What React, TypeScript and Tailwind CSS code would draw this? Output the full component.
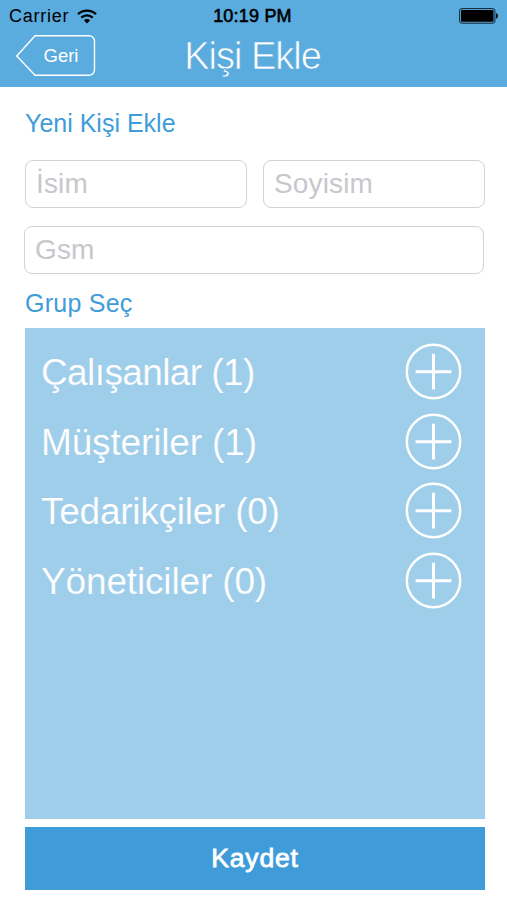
import { useState } from "react";
import clsx from "clsx";

const groups = [
  { name: "Çalışanlar", count: 1, text: "tracking-[-0.6px]" },
  { name: "Müşteriler", count: 1, text: "tracking-[-0.15px]" },
  { name: "Tedarikçiler", count: 0, text: "tracking-[-0.25px]" },
  { name: "Yöneticiler", count: 0, text: "tracking-[-0.15px]" },
];

function WifiIcon() {
  return (
    <svg width="20" height="15" viewBox="0 0 20 15" fill="none" stroke="#000" strokeWidth="2.3">
      <path d="M1 5.2C6 .4 14 .4 19 5.2" />
      <path d="M4.3 8.6c3.3-3 8.1-3 11.4 0" />
      <path d="M6.9 11.2c1.9-1.6 4.3-1.6 6.2 0L10 14.4z" fill="#000" stroke="none" />
    </svg>
  );
}

function BatteryIcon() {
  return (
    <svg width="40" height="16" viewBox="0 0 40 16">
      <rect x=".6" y=".6" width="35.3" height="14.6" rx="2.2" fill="none" stroke="#000" strokeWidth=".8" />
      <rect x="2" y="2" width="32.5" height="11.8" rx="1" fill="#000" />
      <path d="M37 5.2c2.6.4 2.6 4.8 0 5.2z" fill="#000" />
    </svg>
  );
}

function PlusIcon() {
  return (
    <svg width="58" height="58" viewBox="0 0 58 58" fill="none" stroke="#fff">
      <circle cx="28.5" cy="28.5" r="26.7" strokeWidth="2.5" />
      <path d="M28.5 10.8v35.8M10.6 28.7h35.8" strokeWidth="3" />
    </svg>
  );
}

function StatusBar() {
  return (
    <div className="grid h-8 grid-cols-3 items-center pl-[9px] pr-[8px] text-[18px] text-black">
      <div className="flex items-center gap-2">
        <span className="tracking-[0.75px]">Carrier</span>
        <WifiIcon />
      </div>
      <span className="-ml-[3px] text-center tracking-[0.2px] [-webkit-text-stroke:0.6px_#000]">10:19 PM</span>
      <div className="flex justify-end">
        <BatteryIcon />
      </div>
    </div>
  );
}

function Header() {
  return (
    <header className="h-[87px] bg-[#5aabde]">
      <StatusBar />
      <div className="grid grid-cols-[80px_1fr_80px] items-center px-[16px] pt-[2px]">
        <button className="relative flex h-[43px] w-[80px] items-center justify-center pl-[10px] text-[18.5px] text-white">
          <svg className="absolute inset-0" width="80" height="43" viewBox="0 0 80 43" fill="none" stroke="#fff" strokeWidth="1.4">
            <path d="M19 1.7h54a5.5 5.5 0 0 1 5.5 5.5v28.6a5.5 5.5 0 0 1-5.5 5.5H19L.8 22z" />
          </svg>
          Geri
        </button>
        <h1 className="-ml-[2px] pt-[2px] text-center text-[38px] leading-[41px] tracking-[-1px] text-white [-webkit-text-stroke:0.7px_#5aabde]">
          Kişi Ekle
        </h1>
      </div>
    </header>
  );
}

function Field({ placeholder, className }: { placeholder: string; className?: string }) {
  return (
    <input
      type="text"
      placeholder={placeholder}
      className={clsx(
        "h-12 min-w-0 rounded-[8px] border border-[#d2d2d4] bg-white px-[10px] text-[28px] tracking-[0.15px] text-gray-700 outline-none placeholder:text-[#c7c7cc]",
        className
      )}
    />
  );
}

export default function App() {
  const [added, setAdded] = useState<string[]>([]);

  const toggle = (name: string) =>
    setAdded((prev) => (prev.includes(name) ? prev.filter((n) => n !== name) : [...prev, name]));

  return (
    <div className="flex h-[900px] w-[507px] flex-col overflow-hidden bg-white font-['Liberation_Sans',Arial,sans-serif]">
      <Header />

      <main className="flex flex-1 flex-col pl-[25px] pr-[22px]">
        <h2 className="mt-[20px] h-[32px] text-[25px] leading-[32px] text-[#409cd9]">Yeni Kişi Ekle</h2>

        <div className="mt-[21px] grid grid-cols-2 gap-4">
          <Field placeholder="İsim" />
          <Field placeholder="Soyisim" />
        </div>
        <Field placeholder="Gsm" className="-ml-px mr-px mt-[18px]" />

        <h2 className="mt-[13px] h-[32px] text-[25px] leading-[32px] tracking-[0.25px] text-[#409cd9]">Grup Seç</h2>

        <ul className="mt-[9px] h-[491px] bg-[#9fceeb] pl-[16px] pr-[22px] pt-[9px]">
          {groups.map((group) => (
            <li key={group.name} className="flex h-[69.7px] items-center justify-between text-white">
              <span className={clsx("pt-[2px] text-[37px] [-webkit-text-stroke:0.2px_#9fceeb]", group.text)}>
                {group.name} ({group.count})
              </span>
              <button onClick={() => toggle(group.name)} aria-pressed={added.includes(group.name)}>
                <PlusIcon />
              </button>
            </li>
          ))}
        </ul>

        <button className="mt-[8px] h-[63px] bg-[#409cd9] text-[26.5px] tracking-[0.8px] text-white [-webkit-text-stroke:0.8px_#fff]">
          Kaydet
        </button>
      </main>
    </div>
  );
}
